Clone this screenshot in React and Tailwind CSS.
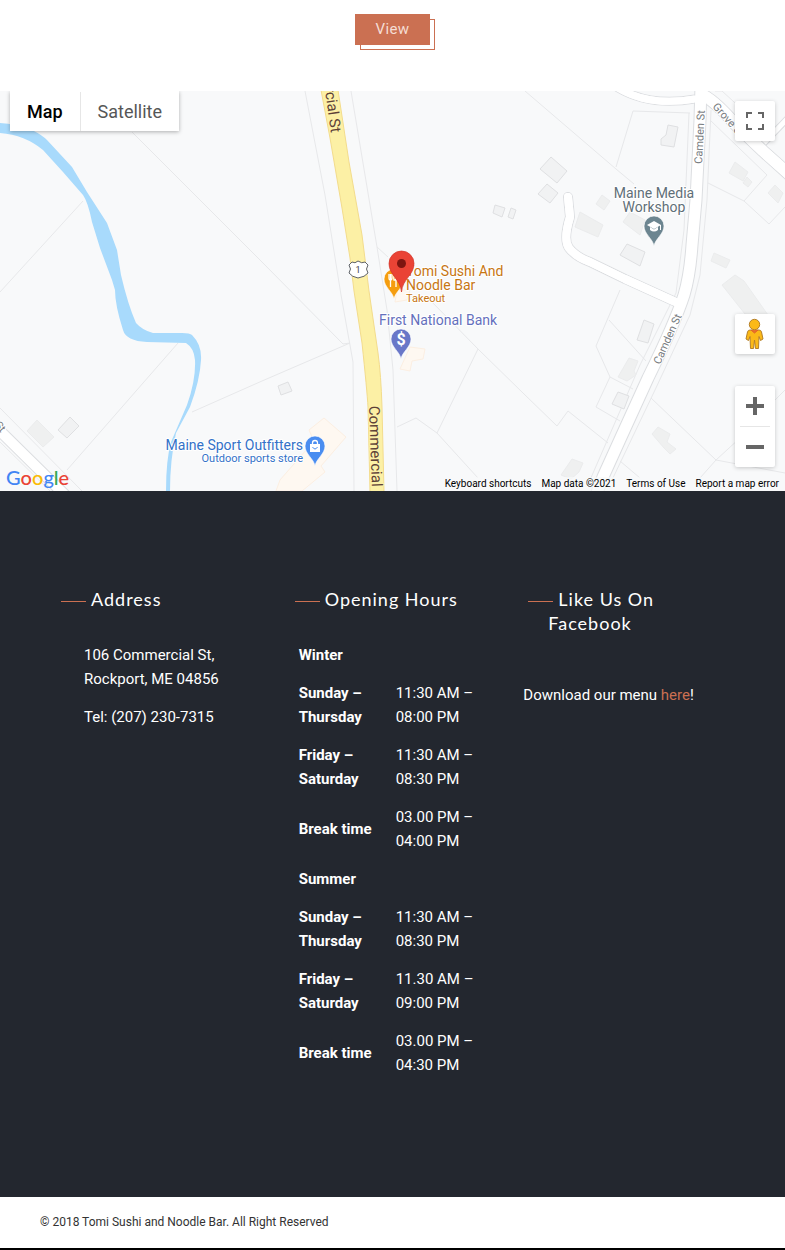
import React from "react";

const rows = [
  { season: "Winter" },
  { day: "Sunday – Thursday", time: "11:30 AM – 08:00 PM" },
  { day: "Friday – Saturday", time: "11:30 AM – 08:30 PM" },
  { day: "Break time", time: "03.00 PM – 04:00 PM" },
  { season: "Summer" },
  { day: "Sunday – Thursday", time: "11:30 AM – 08:30 PM" },
  { day: "Friday – Saturday", time: "11.30 AM – 09:00 PM" },
  { day: "Break time", time: "03.00 PM – 04:30 PM" },
];

const parcels = [
  "M305 91 L325 195 L341 295 L353 362 L354 491",
  "M351 91 L377 247 L387 310 L393 370 L397 491",
  "M132 132 L262 262 L343 344 L350 343",
  "M192 412 L262 381 L350 343",
  "M83 201 L0 292",
  "M178 343 L67 470",
  "M377 247 L388 257 M430 300 L478 349 L524 394 L557 426 L568 411 L608 443",
  "M478 349 L437 433 M397 427 L416 418 L437 433 L478 478",
  "M525 91 L616 169 L634 184",
  "M616 167 L633 111 L690 113",
  "M708 183 L744 201 L769 224 L785 207 M744 201 L767 175 L710 120",
  "M620 290 L596 346 L610 377",
  "M609 320 L646 361 M610 377 L633 389 M610 377 L596 407 L620 421",
  "M651 398 L716 460 L785 473 M716 460 L740 438 M762 413 L785 390",
  "M620 461 L640 478 M716 460 L700 478",
  "M0 408 L82 491 M0 442 L50 491",
  "M711 110 L707 200 L700 275 L690 315 L655 390 L612 480",
  "M689 113 L684 230 L676 293 L640 365 L590 480",
  "M715 91 L722 91 L745 112",
];

const outlinedBuildings = [
  "551 157 567 171 557 183 540 169",
  "547 184 558 193 550 203 538 194",
  "668 125 678 127 674 147 661 145 661 139 666 135",
  "495 205 505 208 502 217 493 213",
  "511 208 516 210 513 219 508 217",
  "627 244 645 252 640 266 620 255",
  "644 320 654 324 648 343 637 340",
  "618 392 629 396 624 409 612 404",
  "70 417 79 426 67 438 58 430",
  "288 382 292 391 281 395 278 386",
];

const plainBuildings = [
  "602 195 610 201 604 210 596 204",
  "580 212 603 225 598 237 575 227",
  "630 212 645 220 640 235 623 222",
  "735 162 748 172 743 181 729 173",
  "747 177 752 182 748 187 743 183",
  "775 185 783 193 778 203 768 193",
  "714 253 730 260 726 268 711 261",
  "735 275 744 281 768 315 745 314 722 285",
  "629 358 638 361 634 371 636 375 627 381 618 377",
  "658 427 670 434 667 442 676 449 670 454 664 448 652 434",
  "572 459 583 463 579 472 571 479 561 475",
  "37 420 54 437 43 447 27 431",
];

const camden =
  "M701 86 L700 120 L696 200 L692 245 Q690 275 684 295 Q675 323 648 378 L622 435 L603 477 L596 495";
const lane = "M568 197 L570 217 Q563 240 569 248 Q576 257 590 262 L625 279 L680 304";
const grove = "M703 95 Q716 102 735 124 L763 151 L792 177";
const crossRoad = "M618 88 Q650 107 695 99";
const branch = "M763 144 L790 116";
const leftRoad = "M-6 425 L66 496";
const river =
  "M0 123 Q16 124 32 130 Q42 135 47 140 L72 167 L87 192 L107 223 L117 250 L121 275 Q128 305 136 323 Q142 330 153 333 L182 333 Q190 333 192 335 Q202 345 201 360 Q200 380 190 407 L176 433 Q170 460 170 491 L166 491 Q166 460 171 442 L187 405 Q196 380 195 360 Q194 348 186 343 L147 342 Q126 341 123 330 Q115 305 115 290 L112 280 L100 248 L92 222 Q88 202 83 195 L63 172 L43 150 Q25 135 0 133 Z";

function Pin({ x, y, color, children }) {
  return (
    <g transform={`translate(${x} ${y})`}>
      <path
        d="M0 19 C-1 12 -10 7 -10 -1 A10 10 0 1 1 10 -1 C10 7 1 12 0 19 Z"
        fill={color}
        stroke="#fff"
        strokeWidth="0.6"
      />
      {children}
    </g>
  );
}

function Road({ d, width }) {
  return (
    <>
      <path d={d} stroke="#dcdee1" strokeWidth={width + 2} />
      <path d={d} stroke="#fff" strokeWidth={width} />
    </>
  );
}

function MapDrawing() {
  return (
    <svg
      viewBox="0 91 785 400"
      preserveAspectRatio="xMidYMid slice"
      className="block h-full w-full font-['Roboto',sans-serif]"
      role="img"
      aria-label="Map of Commercial St, Rockport"
    >
      <rect x="0" y="91" width="785" height="400" fill="#f8f9fa" />
      <g fill="none" stroke="#e7e8ea" strokeWidth="1">
        {parcels.map((d) => (
          <path key={d} d={d} />
        ))}
      </g>
      <g fill="#f1f2f3" stroke="#dfe0e2" strokeWidth="1">
        {outlinedBuildings.map((p) => (
          <polygon key={p} points={p} />
        ))}
      </g>
      <g fill="#eff0f0" stroke="#ebeced" strokeWidth="1">
        {plainBuildings.map((p) => (
          <polygon key={p} points={p} />
        ))}
      </g>
      <g fill="#fef8f1" stroke="#fcefe2" strokeWidth="1">
        <polygon points="324 418 346 437 321 466 325 472 302 491 276 491 280 480 314 441 309 430" />
        <polygon points="410 347 425 349 423 359 412 361 410 371 400 369" />
        <polygon points="397 290 410 290 407 300 395 302" />
      </g>
      <path d={river} fill="#a8dafc" />
      <g fill="none" strokeLinejoin="round" strokeLinecap="round">
        <Road d={branch} width={5} />
        <Road d={crossRoad} width={7} />
        <Road d={grove} width={11} />
        <Road d={leftRoad} width={10} />
        <Road d={lane} width={8} />
        <Road d={camden} width={11} />
        <path d={lane} stroke="#fff" strokeWidth="8" />
        <path d={grove} stroke="#fff" strokeWidth="11" />
        <path d={crossRoad} stroke="#fff" strokeWidth="7" />
      </g>
      <path
        d="M321 90 L330 138 L342 208 L350 258 L354 291 L362 343 Q367 390 368 407 L370 492 L384 492 L382 407 Q381 375 378 353 L369 291 L362 235 L349 162 L338 90 Z"
        fill="#fcf0a5"
        stroke="#f3dc8c"
        strokeWidth="1"
      />

      <g fill="#5d4037" fontSize="15" stroke="#fcf0a5" strokeWidth="2" paintOrder="stroke">
        <text transform="translate(331 133) rotate(82)" textAnchor="end">
          rcial St
        </text>
        <text transform="translate(369 406) rotate(88)">Commercial</text>
      </g>
      <g fill="#777b80" fontSize="11" stroke="#fff" strokeWidth="2" paintOrder="stroke">
        <text transform="translate(702 164) rotate(-87)">Camden St</text>
        <text transform="translate(660 365) rotate(-66)">Camden St</text>
        <text transform="translate(712 107) rotate(48)">Grove St</text>
        <text transform="translate(1 433) rotate(48)" textAnchor="end">
          St
        </text>
      </g>

      <path
        d="M352 262 Q355 264 358 261 Q362 264 365 262 L368 265 Q365 269 368 273 Q365 277 358 278 Q352 277 349 273 Q352 269 349 265 Z"
        fill="#fff"
        stroke="#5f6368"
      />
      <text x="358" y="273" fontSize="9" textAnchor="middle" fill="#3c4043">
        1
      </text>

      <g stroke="#fff" strokeWidth="2" strokeLinejoin="round" paintOrder="stroke" fontSize="14">
        <g fill="#5f6f78" textAnchor="middle">
          <text x="654" y="198">Maine Media</text>
          <text x="654" y="212">Workshop</text>
        </g>
        <g fill="#c77613">
          <text x="406" y="276">Tomi Sushi And</text>
          <text x="406" y="290">Noodle Bar</text>
          <text x="406" y="302" fontSize="11">
            Takeout
          </text>
        </g>
        <text x="379" y="325" fill="#6470bd">
          First National Bank
        </text>
        <g fill="#3371c8" textAnchor="end">
          <text x="303" y="450">Maine Sport Outfitters</text>
          <text x="303" y="462" fontSize="11">
            Outdoor sports store
          </text>
        </g>
      </g>

      <Pin x={654} y={227} color="#6c8590">
        <path d="M-7 -2 L0 -6 L7 -2 L0 2 Z M-4 0 V3 Q0 6 4 3 V0 L0 2.5 Z" fill="#fff" />
        <path d="M6.5 -2 V3" stroke="#fff" />
      </Pin>
      <Pin x={401} y={340} color="#6977c8">
        <text y="5" fontSize="16" fontWeight="700" textAnchor="middle" fill="#fff">
          $
        </text>
      </Pin>
      <Pin x={315} y={447} color="#4a8df0">
        <path d="M-5 -3 H5 V5 H-5 Z" fill="#fff" />
        <path d="M-2.5 -3 V-4 A2.5 2.5 0 0 1 2.5 -4 V-3" fill="none" stroke="#fff" strokeWidth="1.3" />
        <path d="M-2.5 0 Q0 4 2.5 0" fill="none" stroke="#4a8df0" />
      </Pin>
      <Pin x={394} y={280} color="#f59d0e">
        <path
          d="M-5 -6 V-2 Q-5 0 -3.5 0 Q-2 0 -2 -2 V-6 M-3.5 -6 V7 M2 7 V-6 Q-1 -4 0 0 H2"
          fill="none"
          stroke="#fff"
          strokeWidth="1.3"
        />
      </Pin>
      <path
        d="M401.500 292 C400.500 279 389 275 389 263.500 A12.500 12.500 0 0 1 414 263.500 C414 275 402.500 279 401.500 292 Z"
        fill="#ea4335"
        stroke="#d13328"
        strokeWidth="0.7"
      />
      <circle cx="401.500" cy="263.500" r="4.500" fill="#7d1510" />
    </svg>
  );
}

function FooterHeading({ children }) {
  return (
    <h2 className="pl-[39px] pr-4 -indent-5 font-['Lato',sans-serif] text-[18px] leading-6 tracking-[1px]">
      <span className="mr-[5px] inline-block h-px w-[25px] bg-[#cb7052] align-middle" />
      {children}
    </h2>
  );
}

const control =
  "flex items-center justify-center rounded-xs bg-white shadow-[0_1px_4px_rgba(0,0,0,0.2)]";

export default function App() {
  return (
    <div className="bg-white font-['Roboto',sans-serif] text-[15px] leading-6">
      <div className="flex justify-center pt-[14px] pb-[46px]">
        <a
          href="#menu"
          className="relative isolate bg-[#cb7052] px-[21px] text-[15px] leading-[31px] tracking-wide text-[#f5ddd4] before:absolute before:top-[5px] before:left-[5px] before:-z-20 before:h-full before:w-full before:border before:border-[#cb7052] after:absolute after:inset-0 after:-z-10 after:bg-[#cb7052]"
        >
          View
        </a>
      </div>

      <section className="relative h-[400px] overflow-hidden bg-[#f8f9fa]" aria-label="Map">
        <MapDrawing />

        <div className="absolute top-0 left-[10px] flex h-10 bg-white pt-px text-[18px] shadow-[0_1px_4px_rgba(0,0,0,0.3)]">
          <button type="button" className="border-r border-[#e6e6e6] px-[17px] font-medium text-black">
            Map
          </button>
          <button type="button" className="px-[17px] text-[#565656]">
            Satellite
          </button>
        </div>

        <div className="absolute top-[10px] right-[10px] bottom-6 flex w-10 flex-col">
          <button type="button" aria-label="Toggle fullscreen view" className={`h-10 w-10 ${control}`}>
            <svg viewBox="0 0 18 18" className="h-[18px] w-[18px]" fill="#666">
              <path d="M0 0v6h2V2h4V0H0zm16 0h-4v2h4v4h2V0h-2zm0 16h-4v2h6v-6h-2v4zM2 12H0v6h6v-2H2v-4z" />
            </svg>
          </button>
          <button
            type="button"
            aria-label="Drag Pegman onto the map to open Street View"
            className={`mt-auto h-10 w-10 ${control}`}
          >
            <svg viewBox="0 0 20 32" className="h-8 w-5" stroke="#b5802a" strokeWidth="1" strokeLinejoin="round">
              <path
                d="M5 12 H14 Q16 12 16.500 14 L18 21 L15.500 22.500 L14 18.500 L13.500 30.500 H10.500 L9.500 22 L8.500 30.500 H5.500 L5 18.500 L3.500 22.500 L1 21 L2.500 14 Q3 12 5 12 Z"
                fill="#fbb917"
              />
              <circle cx="9.500" cy="6.500" r="5.200" fill="#fbb917" />
              <path d="M6 12 L9.500 15 L13 12" fill="#e8702a" stroke="#e0642a" />
            </svg>
          </button>
          <div className="mt-8 rounded-xs bg-white shadow-[0_1px_4px_rgba(0,0,0,0.2)]">
            <button type="button" aria-label="Zoom in" className="flex h-10 w-10 items-center justify-center">
              <svg viewBox="0 0 18 18" className="h-[18px] w-[18px]" fill="#666">
                <path d="M7 0h4v7h7v4h-7v7H7v-7H0V7h7z" />
              </svg>
            </button>
            <div className="mx-[5px] h-px bg-[#e6e6e6]" />
            <button type="button" aria-label="Zoom out" className="flex h-10 w-10 items-center justify-center">
              <svg viewBox="0 0 18 18" className="h-[18px] w-[18px]" fill="#666">
                <path d="M0 7h18v4H0z" />
              </svg>
            </button>
          </div>
        </div>

        <a
          href="#google-maps"
          aria-label="Google"
          className="absolute bottom-0 left-[6px] flex font-['Lato',sans-serif] text-[20px] leading-7 font-medium text-[#4285f4]"
        >
          <span>G</span>
          <span className="text-[#ea4335]">o</span>
          <span className="text-[#fbbc05]">o</span>
          <span>g</span>
          <span className="text-[#34a853]">l</span>
          <span className="text-[#ea4335]">e</span>
        </a>

        <div className="absolute right-0 bottom-0 flex gap-[10px] bg-[#f8f9fa]/70 px-[6px] text-[10px] leading-[14px] text-black">
          <button type="button">Keyboard shortcuts</button>
          <span>Map data ©2021</span>
          <a href="#terms">Terms of Use</a>
          <a href="#report">Report a map error</a>
        </div>
      </section>

      <footer>
        <div className="grid grid-cols-3 bg-[#23272f] px-[42px] pt-24 pb-[113px] text-white">
          <section>
            <FooterHeading>Address</FooterHeading>
            <address className="mt-8 pl-[42px] not-italic">
              <p>
                106 Commercial St,
                <br />
                Rockport, ME 04856
              </p>
              <p className="mt-[14px]">Tel: (207) 230-7315</p>
            </address>
          </section>

          <section>
            <FooterHeading>Opening Hours</FooterHeading>
            <table className="mt-[25px] ml-[23px] text-left">
              <tbody>
                {rows.map((row, i) =>
                  row.season ? (
                    <tr key={i}>
                      <th colSpan={2} className="py-[7px] font-bold">
                        {row.season}
                      </th>
                    </tr>
                  ) : (
                    <tr key={i}>
                      <th scope="row" className="w-[97px] py-[7px] pr-5 font-bold">
                        {row.day}
                      </th>
                      <td className="w-[90px] py-[7px]">{row.time}</td>
                    </tr>
                  )
                )}
              </tbody>
            </table>
          </section>

          <section>
            <FooterHeading>Like Us On Facebook</FooterHeading>
            <p className="mt-12 pl-[14px]">
              Download our menu{" "}
              <a href="#menu" className="text-[#cb7052]">
                here
              </a>
              !
            </p>
          </section>
        </div>
        <div className="border-b-2 border-black px-10 py-[13px] text-[12px] leading-[25px] text-[#333]">
          © 2018 Tomi Sushi and Noodle Bar. All Right Reserved
        </div>
      </footer>
    </div>
  );
}
